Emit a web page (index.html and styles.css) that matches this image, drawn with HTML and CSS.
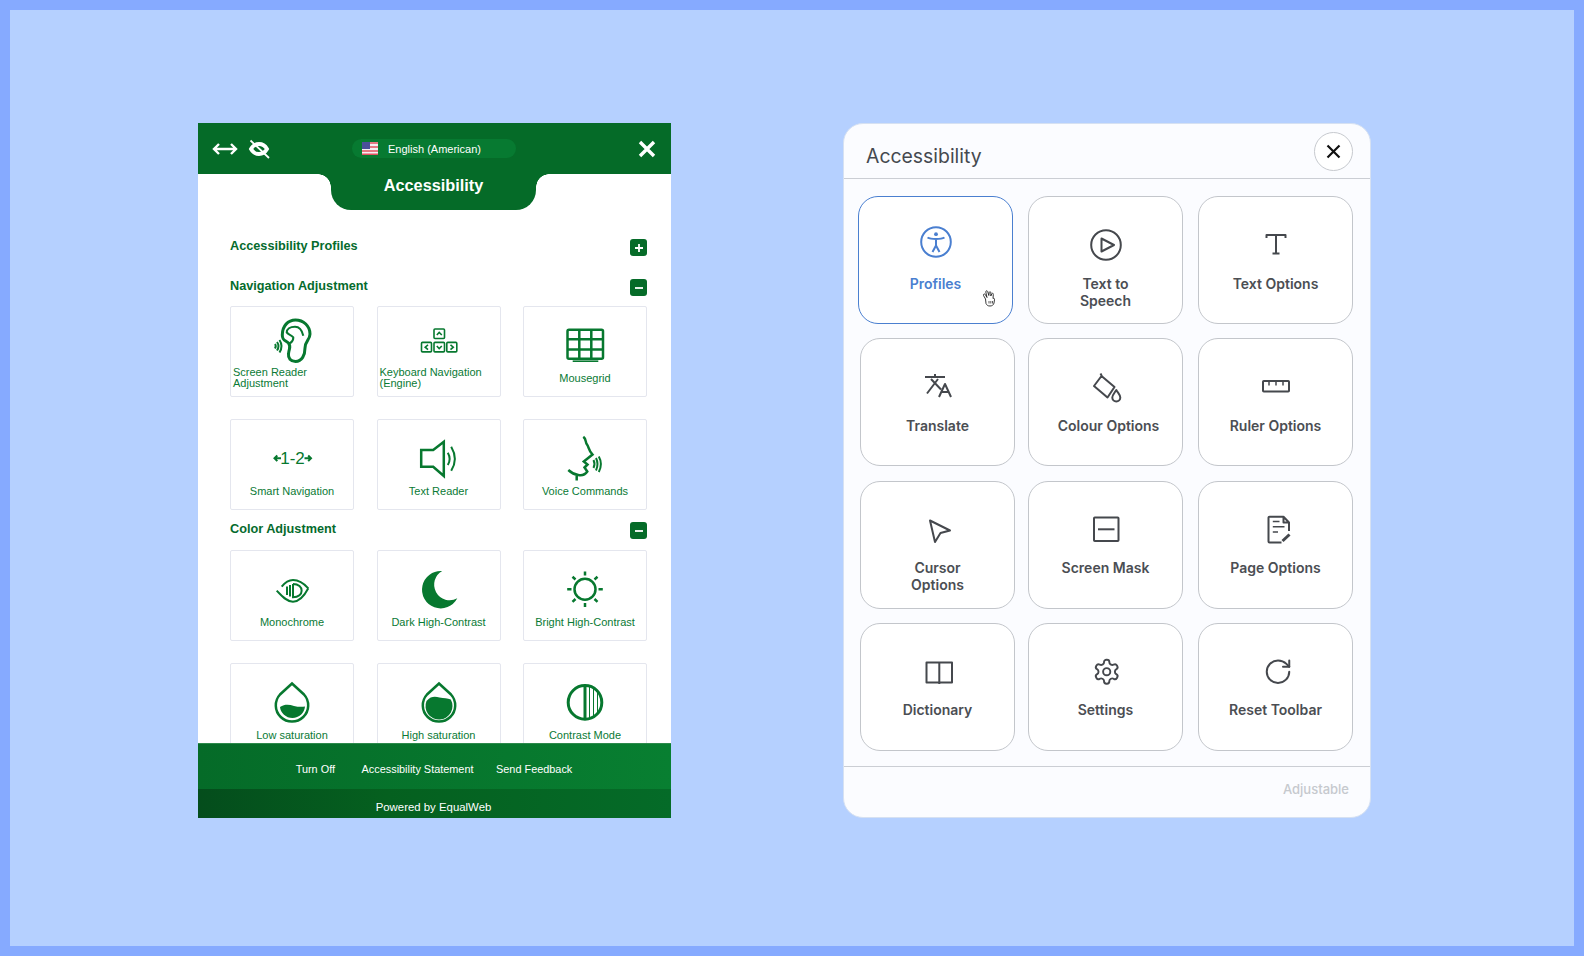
FILE: index.html
```html
<!DOCTYPE html>
<html lang="en">
<head>
    <meta charset="UTF-8">
    <meta name="viewport" content="width=device-width, initial-scale=1.0">
    <title>Accessibility widgets</title>
    <link rel="stylesheet" href="styles.css">
</head>
<body>
<div class="frame">

    <!-- green widget -->
    <section class="eq-panel">
        <header class="eq-top">
            <div class="eq-tools">
                <svg width="26" height="14" viewBox="0 0 26 14" class="eq-line-white"><path d="M2 7H24M7 2L2 7L7 12M19 2L24 7L19 12"/></svg>
                <svg width="24" height="22" viewBox="0 0 24 22" class="eq-line-white"><path class="eq-eye" d="M4 11C6 7.500 9 6 12 6S18 7.500 20 11C18 14.500 15 16 12 16S6 14.500 4 11Z"/><path class="eq-slash" d="M3.500 2.500L22 20"/></svg>
            </div>
            <div class="eq-lang">
                <svg width="16" height="13" viewBox="0 0 16 13" class="eq-flag">
                    <rect width="16" height="13" fill="#f4f0f4"/>
                    <path d="M0 1H16M0 5H16M0 9H16M0 12.400H16" stroke="#e0525f" stroke-width="1.600"/>
                    <rect width="8" height="7" fill="#4a4f9a"/>
                </svg>
                <span>English (American)</span>
            </div>
            <button class="eq-close">
                <svg width="18" height="18" viewBox="0 0 18 18"><path d="M2 2L16 16M16 2L2 16" stroke="#fff" stroke-width="3.400"/></svg>
            </button>
        </header>
        <div class="eq-tab">Accessibility</div>

        <div class="eq-body">
            <div class="eq-head eq-head-first">
                <h3>Accessibility Profiles</h3>
                <span class="eq-toggle"><svg width="10" height="10" viewBox="0 0 10 10"><path d="M1 5H9M5 1V9"/></svg></span>
            </div>
            <div class="eq-head">
                <h3>Navigation Adjustment</h3>
                <span class="eq-toggle"><svg width="10" height="10" viewBox="0 0 10 10"><path d="M1 5H9"/></svg></span>
            </div>
            <div class="eq-grid">
                <div class="eq-tile">
                    <svg class="eq-icon" viewBox="0 0 50 50">
                        <path class="ln3" d="M15.300 21C15.300 12 21 6 28.500 6C36.500 6 43 12 43 20C43 26 38 27 38 34C38 41 35 47.400 28.500 47.400C23.500 47.400 21 44 21.500 40C22 34 24.500 33 21.500 29C18.500 26 15.300 27 15.300 21Z"/>
                        <path class="ln2" d="M36.300 21.700C35 16 32 12.700 28 12.700C23 12.700 19.700 15 19.700 18.400C21 20.500 24 20.500 26.300 23.400C26.500 26 25 28 23 29.400"/>
                        <path class="ln2" d="M8 30Q9.500 32 8 34.500M10 28Q13 32 10 36.500M12.500 26Q16.500 32 12.500 38.500"/>
                    </svg>
                    <span class="eq-label eq-left">Screen Reader Adjustment</span>
                </div>
                <div class="eq-tile">
                    <svg class="eq-icon" viewBox="0 0 50 50">
                        <g class="ln15">
                            <rect x="20" y="15" width="10.500" height="9.500" rx="1"/>
                            <rect x="7.500" y="28.400" width="10" height="9.500" rx="1"/>
                            <rect x="20" y="28.400" width="10.500" height="9.500" rx="1"/>
                            <rect x="32.800" y="28.400" width="10" height="9.500" rx="1"/>
                            <path d="M22.800 21L25.200 18.500L27.800 21M22.800 32L25.200 34.500L27.800 32M14 30.800L11.200 33.200L14 35.600M36.500 30.800L39.300 33.200L36.500 35.600"/>
                        </g>
                    </svg>
                    <span class="eq-label eq-left">Keyboard Navigation (Engine)</span>
                </div>
                <div class="eq-tile">
                    <svg class="eq-icon" viewBox="0 0 50 50">
                        <g class="ln25">
                            <rect x="7.500" y="15.700" width="35.500" height="29" rx="1.500"/>
                            <path d="M19.300 15.700V44.700M31.300 15.700V44.700M7.500 25.200H43M7.500 35.500H43"/>
                        </g>
                        <path class="ln15" d="M12.700 47.200H38.300"/>
                    </svg>
                    <span class="eq-label">Mousegrid</span>
                </div>
                <div class="eq-tile">
                    <svg class="eq-icon" viewBox="0 0 50 50">
                        <path class="ln2" d="M7.500 31.300H14M10.300 28.500L7.500 31.300L10.300 34.100M37.500 31.300H44M41.200 28.500L44 31.300L41.200 34.100"/>
                        <text x="25.500" y="37" text-anchor="middle" class="eq-digits">1-2</text>
                    </svg>
                    <span class="eq-label">Smart Navigation</span>
                </div>
                <div class="eq-tile">
                    <svg class="eq-icon" viewBox="0 0 50 50">
                        <path class="ln25" d="M7.200 23H19.200L29.800 14.700V49L19.200 39.700H7.200Z"/>
                        <path class="ln2" d="M33.800 25.700Q37.500 32 33.800 38M37.200 19.700Q44.500 32 37.200 43.700"/>
                    </svg>
                    <span class="eq-label">Text Reader</span>
                </div>
                <div class="eq-tile">
                    <svg class="eq-icon" viewBox="0 0 50 50">
                        <path class="ln25" d="M23.300 9.700C26.500 12 25 15 27 17.500C29 20 28 22.500 32.500 27.500L23.800 34.500L27.500 37.500L24.500 40.500L27.300 44.500C25 48 21 48.500 18.300 48C14 47.500 11 45.500 8.300 43M16.700 47V53.500"/>
                        <path class="ln2" d="M33.500 33Q35.500 37 33.500 41M36 31Q39 37 36 43.500M38.800 29.500Q43 37 38.800 45"/>
                    </svg>
                    <span class="eq-label">Voice Commands</span>
                </div>
            </div>

            <div class="eq-head eq-head-color">
                <h3>Color Adjustment</h3>
                <span class="eq-toggle"><svg width="10" height="10" viewBox="0 0 10 10"><path d="M1 5H9"/></svg></span>
            </div>
            <div class="eq-grid">
                <div class="eq-tile">
                    <svg class="eq-icon" viewBox="0 0 50 50">
                        <path class="ln2" d="M14.700 28.700C18 24.500 22 22 26 22C32 22 37 25.500 41.300 30.300M9.700 32.700C15 38.500 20 43.700 26 43.700C32 43.700 37 38.500 41.300 30.300"/>
                        <path class="ln2" d="M26 26C37.500 26 37.500 39.300 26 39.300V26M23 27V38.500M20 28.500V37"/>
                    </svg>
                    <span class="eq-label">Monochrome</span>
                </div>
                <div class="eq-tile">
                    <svg class="eq-icon" viewBox="0 0 50 50">
                        <path class="solid" d="M28.200 13A18.700 18.700 0 1 0 43.300 40.300A14.500 14.500 0 0 1 28.200 13Z"/>
                    </svg>
                    <span class="eq-label">Dark High-Contrast</span>
                </div>
                <div class="eq-tile">
                    <svg class="eq-icon" viewBox="0 0 50 50">
                        <circle class="ln25" cx="25" cy="31.300" r="10.500"/>
                        <path class="ln25" d="M25 13.500V17.500M25 45V49M7.200 31.300H11.500M38.500 31.300H42.800M12.500 18.800L15.500 21.500M34.500 41L37.500 43.800M37.500 18.800L34.500 21.500M15.500 41L12.500 43.800"/>
                    </svg>
                    <span class="eq-label">Bright High-Contrast</span>
                </div>
                <div class="eq-tile">
                    <svg class="eq-icon" viewBox="0 0 50 50">
                        <path class="ln25" d="M25 12.500L37 23.500A16.200 16.200 0 1 1 13 23.500Z"/>
                        <path class="solid" d="M13 36C18 33 22 33.500 27 35C31 36 35 36 38 35.500C37.500 42 32 47 25.500 47C19 47 13.500 42 13 36Z"/>
                    </svg>
                    <span class="eq-label">Low saturation</span>
                </div>
                <div class="eq-tile">
                    <svg class="eq-icon" viewBox="0 0 50 50">
                        <path class="ln25" d="M25 12.500L37 23.500A16.200 16.200 0 1 1 13 23.500Z"/>
                        <path class="solid" d="M12.500 30C17 25 21 25.500 25.500 26.500C30 27.500 33.500 27 36.800 28.500A13.500 13.500 0 1 1 12.500 30Z"/>
                    </svg>
                    <span class="eq-label">High saturation</span>
                </div>
                <div class="eq-tile">
                    <svg class="eq-icon" viewBox="0 0 50 50">
                        <circle class="ln3" cx="25" cy="31.400" r="16.800"/>
                        <path class="ln3" d="M25 14.500V48.500"/>
                        <path class="ln1" d="M29.500 15.500V47.500M33.500 17.500V45.500M37.500 20V43"/>
                    </svg>
                    <span class="eq-label">Contrast Mode</span>
                </div>
            </div>
        </div>

        <footer class="eq-foot">
            <nav class="eq-links">
                <a class="eq-link-first">Turn Off</a>
                <a>Accessibility Statement</a>
                <a>Send Feedback</a>
            </nav>
            <div class="eq-powered">Powered by EqualWeb</div>
        </footer>
    </section>

    <!-- white widget -->
    <section class="ad-panel">
        <header class="ad-top">
            <h2>Accessibility</h2>
            <button class="ad-close">
                <svg width="15" height="15" viewBox="0 0 15 15"><path d="M1.500 1.500L13.500 13.500M13.500 1.500L1.500 13.500" stroke="#111" stroke-width="2.200"/></svg>
            </button>
        </header>

        <div class="ad-grid">
            <div class="ad-tile ad-active">
                <svg class="ad-icon" viewBox="0 0 40 40">
                    <circle cx="20" cy="20" r="14.800"/>
                    <circle class="dot" cx="20" cy="12.200" r="1.900"/>
                    <path d="M11.500 15.500C15 17.500 25 17.500 28.500 15.500M20 17V23.500M20 23.500L16.500 30M20 23.500L23.500 30"/>
                </svg>
                <span class="ad-label">Profiles</span>
                <svg class="ad-hand" width="14" height="17" viewBox="0 0 14 17">
                    <path d="M3.500 9L1.500 5.500C1 4 2.600 3.500 3.300 4.500L5 7.500L3.800 2C3.500 .8 5.200 .3 5.700 1.500L6.800 5.500L7.200 2.500C7.500 1.300 8.800 1.500 8.900 2.800L8.800 6L9.800 3.800C10.400 2.800 11.500 3.300 11.300 4.500L11 8.500C11.800 8 12.800 8.500 12.500 9.800L12 13C11.600 15 10 16 8 16C5.500 16 4.800 15 4 13.500Z" fill="#fff" stroke="#222" stroke-width=".9"/>
                    <path d="M7 11V13.500M8.800 11V13.500M10.500 11V13.500" stroke="#333" stroke-width=".8" fill="none"/>
                </svg>
            </div>
            <div class="ad-tile">
                <svg class="ad-icon" viewBox="0 0 40 40">
                    <circle cx="20" cy="23" r="14.800"/>
                    <path d="M15.500 16.500L28 23L15.500 29.500Z"/>
                </svg>
                <span class="ad-label">Text to Speech</span>
            </div>
            <div class="ad-tile">
                <svg class="ad-icon" viewBox="0 0 40 40">
                    <path d="M10.500 16V13H29.500V16M20 13V31.500M16.500 31.500H23.500"/>
                </svg>
                <span class="ad-label">Text Options</span>
            </div>
            <div class="ad-tile">
                <svg class="ad-icon" viewBox="0 0 40 40">
                    <path d="M7 13H27M17 10V13M13 15L23 25.500M20 15L9 29.500M21 33L27 20L33 33M23 28H31"/>
                </svg>
                <span class="ad-label">Translate</span>
            </div>
            <div class="ad-tile">
                <svg class="ad-icon" viewBox="0 0 40 40">
                    <path d="M15.500 12L28.500 23L21.500 33.500L8 22ZM14.500 9.500L16 12.500M30.300 26C28.500 29 26.300 31 26.300 33.500A4 4 0 0 0 34.300 33.500C34.300 31 32 29 30.300 26Z"/>
                </svg>
                <span class="ad-label ad-nudge">Colour Options</span>
            </div>
            <div class="ad-tile">
                <svg class="ad-icon" viewBox="0 0 40 40">
                    <rect x="7" y="17" width="26" height="10.500" rx=".8"/>
                    <path class="thin" d="M13 17V21.500M20 17V21.500M27 17V21.500"/>
                </svg>
                <span class="ad-label">Ruler Options</span>
            </div>
            <div class="ad-tile">
                <svg class="ad-icon" viewBox="0 0 40 40">
                    <path d="M12 13.500L32 23.500L22.500 26L17 35Z"/>
                </svg>
                <span class="ad-label">Cursor Options</span>
            </div>
            <div class="ad-tile">
                <svg class="ad-icon" viewBox="0 0 40 40">
                    <rect x="8" y="10.500" width="24.500" height="23.500" rx=".8"/>
                    <path d="M12 22.300H28.500"/>
                </svg>
                <span class="ad-label">Screen Mask</span>
            </div>
            <div class="ad-tile">
                <svg class="ad-icon" viewBox="0 0 40 40">
                    <path d="M25.500 35.500H13.500Q12.500 35.500 12.500 34.500V10.500Q12.500 9.700 13.500 9.700H27.500L33 15.500V24M27.500 9.700V15.500H33"/>
                    <path class="thin" d="M16.800 14.500H23.500M16.800 19.700H28.500M16.800 25H22"/>
                    <path class="fat" d="M26.500 34L33.500 27.500"/>
                </svg>
                <span class="ad-label">Page Options</span>
            </div>
            <div class="ad-tile">
                <svg class="ad-icon" viewBox="0 0 40 40">
                    <path d="M8.500 13.500H21.300V33.500H8.500ZM21.300 13.500H34V33.500H21.300ZM21.300 33.500V35"/>
                </svg>
                <span class="ad-label">Dictionary</span>
            </div>
            <div class="ad-tile">
                <svg class="ad-icon" viewBox="0 0 40 40">
                    <g transform="translate(6.300 8.300) scale(1.200)">
                        <path class="gear" d="M12.220 2h-.44a2 2 0 0 0-2 2v.18a2 2 0 0 1-1 1.730l-.43.25a2 2 0 0 1-2 0l-.15-.08a2 2 0 0 0-2.730.73l-.22.38a2 2 0 0 0 .73 2.730l.15.1a2 2 0 0 1 1 1.720v.51a2 2 0 0 1-1 1.740l-.15.09a2 2 0 0 0-.73 2.730l.22.38a2 2 0 0 0 2.730.73l.15-.08a2 2 0 0 1 2 0l.43.25a2 2 0 0 1 1 1.730V20a2 2 0 0 0 2 2h.44a2 2 0 0 0 2-2v-.18a2 2 0 0 1 1-1.730l.43-.25a2 2 0 0 1 2 0l.15.08a2 2 0 0 0 2.730-.73l.22-.39a2 2 0 0 0-.73-2.730l-.15-.08a2 2 0 0 1-1-1.740v-.5a2 2 0 0 1 1-1.740l.15-.09a2 2 0 0 0 .73-2.730l-.22-.38a2 2 0 0 0-2.730-.73l-.15.08a2 2 0 0 1-2 0l-.43-.25a2 2 0 0 1-1-1.730V4a2 2 0 0 0-2-2z"/>
                        <circle class="gear" cx="12" cy="12" r="3"/>
                    </g>
                </svg>
                <span class="ad-label">Settings</span>
            </div>
            <div class="ad-tile">
                <svg class="ad-icon" viewBox="0 0 40 40">
                    <g transform="translate(7 7.700) scale(1.250)">
                        <path class="gear" d="M21 12a9 9 0 1 1-9-9c2.520 0 4.930 1 6.740 2.740L21 8"/>
                        <path class="gear" d="M21 3v5h-5"/>
                    </g>
                </svg>
                <span class="ad-label">Reset Toolbar</span>
            </div>
        </div>

        <footer class="ad-foot">Adjustable</footer>
    </section>

</div>
</body>
</html>
```

FILE: styles.css
```css
* {
    box-sizing: border-box;
}
body {
    margin: 0;
    background-color: #b5d0ff;
}
h2, h3 {
    margin: 0;
}
button {
    padding: 0;
    border: none;
    background: none;
}
.frame {
    display: flex;
    align-items: flex-start;
    gap: 172px;
    width: 1584px;
    height: 956px;
    padding: 113px 0 0 188px;
    border: 10px solid #86aaff;
    overflow: hidden;
}

/* green widget */
.eq-panel {
    display: flex;
    flex-direction: column;
    flex: none;
    width: 473px;
    height: 695px;
    background-color: #fff;
    font-family: "Liberation Sans", Arial, sans-serif;
    overflow: hidden;
}
.eq-top {
    display: grid;
    grid-template-columns: 1fr 164px 1fr;
    align-items: center;
    flex: none;
    height: 51px;
    padding: 0 15px 0 14px;
    background-color: #056b28;
}
.eq-tools {
    display: flex;
    align-items: center;
    gap: 9px;
}
.eq-lang {
    display: flex;
    align-items: center;
    gap: 10px;
    height: 19px;
    padding-left: 10px;
    border-radius: 10px;
    background-color: #077a31;
    color: #fff;
    font-size: 11px;
}
.eq-flag {
    flex: none;
}
.eq-close {
    justify-self: end;
    height: 18px;
}
.eq-line-white {
    fill: none;
    stroke: #fff;
    stroke-width: 2.400;
}
.eq-line-white .eq-eye {
    stroke-width: 3.800;
}
.eq-line-white .eq-slash {
    stroke-width: 1.800;
}
.eq-tab {
    position: relative;
    flex: none;
    width: 205px;
    height: 36px;
    margin-left: 133px;
    padding-top: 1px;
    border-radius: 0 0 20px 20px;
    background-color: #056b28;
    color: #fff;
    font-size: 16.300px;
    font-weight: bold;
    line-height: 20px;
    text-align: center;
}
.eq-tab::before,
.eq-tab::after {
    content: "";
    position: absolute;
    top: 0;
    width: 13px;
    height: 13px;
}
.eq-tab::before {
    right: 100%;
    background: radial-gradient(circle at 0 100%, transparent 12.500px, #056b28 13px);
}
.eq-tab::after {
    left: 100%;
    background: radial-gradient(circle at 100% 100%, transparent 12.500px, #056b28 13px);
}
.eq-body {
    flex: 1;
    min-height: 0;
    padding: 0 24px 0 32px;
    overflow: hidden;
}
.eq-head {
    display: flex;
    justify-content: space-between;
    height: 17px;
    margin: 23px 0 9.700px;
}
.eq-head-first {
    margin: 29px 0 0;
}
.eq-head-color {
    margin: 12.300px 0 10.500px;
}
.eq-head h3 {
    padding-top: 1px;
    color: #056b2d;
    font-size: 12.700px;
    font-weight: bold;
    line-height: 13px;
}
.eq-toggle {
    display: flex;
    align-items: center;
    justify-content: center;
    width: 17px;
    height: 17px;
    border-radius: 3px;
    background-color: #056b28;
}
.eq-toggle path {
    fill: none;
    stroke: #fff;
    stroke-width: 1.800;
}
.eq-grid {
    display: grid;
    grid-template-columns: repeat(3, 1fr);
    grid-auto-rows: 91px;
    gap: 22.500px;
}
.eq-tile {
    display: flex;
    flex-direction: column;
    align-items: center;
    padding-top: 7px;
    border: 1px solid #e4e6ee;
    border-radius: 2px;
    background-color: #fff;
}
.eq-icon {
    flex: none;
    width: 50px;
    height: 50px;
    overflow: visible;
}
.eq-icon path,
.eq-icon circle,
.eq-icon rect {
    fill: none;
    stroke: #07782f;
}
.eq-icon .ln1 { stroke-width: 1; }
.eq-icon .ln15 path,
.eq-icon .ln15 rect,
.eq-icon .ln15 { stroke-width: 1.600; }
.eq-icon .ln2 { stroke-width: 2; }
.eq-icon .ln25 path,
.eq-icon .ln25 rect,
.eq-icon .ln25 { stroke-width: 2.500; }
.eq-icon .ln3 { stroke-width: 3; }
.eq-icon .solid {
    fill: #07782f;
    stroke: none;
}
.eq-digits {
    fill: #07782f;
    font-size: 17px;
}
.eq-label {
    display: flex;
    align-items: center;
    justify-content: center;
    width: 100%;
    height: 22px;
    margin-top: 3.400px;
    padding: 0 2px;
    color: #0a7a35;
    font-size: 11px;
    line-height: 11px;
    text-align: center;
}
.eq-left {
    justify-content: flex-start;
    text-align: left;
}
.eq-foot {
    flex: none;
    color: #fff;
    font-size: 10.900px;
}
.eq-links {
    display: flex;
    align-items: center;
    justify-content: center;
    gap: 22.500px;
    height: 46px;
    padding: 4px 1px 0 0;
    border-top: 1px solid #2d8a4c;
    background: linear-gradient(90deg, #056b28, #087f31);
}
.eq-link-first {
    margin-right: 4px;
}
.eq-powered {
    display: flex;
    align-items: center;
    justify-content: center;
    height: 29px;
    padding: 6px 2px 0 0;
    background: linear-gradient(90deg, #044d1c, #05601f 40%, #056b28);
    font-size: 11.400px;
}

/* white widget */
.ad-panel {
    display: flex;
    flex-direction: column;
    flex: none;
    width: 528px;
    height: 695px;
    border: 1px solid #d6e1f2;
    border-radius: 20px;
    background-color: #fbfcff;
    font-family: Inter, "Liberation Sans", sans-serif;
    overflow: hidden;
}
.ad-top {
    display: flex;
    align-items: center;
    justify-content: space-between;
    flex: none;
    height: 55px;
    padding: 0 17px 0 22px;
    border-bottom: 1px solid #cbced4;
}
.ad-top h2 {
    padding-top: 9px;
    color: #45494f;
    font-size: 19.400px;
    font-weight: 400;
}
.ad-close {
    display: flex;
    align-items: center;
    justify-content: center;
    width: 39px;
    height: 39px;
    margin-top: 1px;
    border: 1px solid #c6c9ce;
    border-radius: 50%;
    background-color: #fff;
}
.ad-grid {
    display: grid;
    grid-template-columns: 168px 170px 155px;
    grid-auto-rows: 128px;
    row-gap: 14.300px;
    flex: none;
    height: 588px;
    padding: 17px 0 0 16px;
    border-bottom: 1px solid #cbced4;
}
.ad-tile {
    position: relative;
    display: flex;
    flex-direction: column;
    align-items: center;
    width: 155px;
    padding-top: 25px;
    border: 1px solid #c3c6cb;
    border-radius: 20px;
    background-color: #fff;
}
.ad-active {
    margin-left: -2px;
    border-color: #4a7fd0;
}
.ad-icon {
    flex: none;
    width: 40px;
    height: 40px;
}
.ad-icon path,
.ad-icon rect,
.ad-icon circle {
    fill: none;
    stroke: #45484d;
    stroke-width: 2;
    stroke-linejoin: round;
}
.ad-icon .thin {
    stroke-width: 1.500;
}
.ad-icon .fat {
    stroke-width: 3;
}
.ad-icon .gear {
    stroke-width: 1.600;
    stroke-linecap: round;
}
.ad-active .ad-icon path,
.ad-active .ad-icon circle {
    stroke: #4a7fd0;
}
.ad-active .ad-icon .dot {
    fill: #4a7fd0;
    stroke: none;
}
.ad-label {
    width: 100px;
    margin-top: 12.500px;
    color: #4b4e53;
    font-size: 14px;
    font-weight: 600;
    line-height: 17px;
    text-align: center;
}
.ad-active .ad-label {
    color: #4a7fd0;
}
.ad-nudge {
    width: 120px;
    padding-left: 6px;
}
.ad-hand {
    position: absolute;
    left: 123px;
    top: 93px;
}
.ad-foot {
    flex: 1;
    padding: 14px 21px 0 0;
    color: #c6c9ce;
    font-size: 13px;
    font-weight: 500;
    text-align: right;
}
```
